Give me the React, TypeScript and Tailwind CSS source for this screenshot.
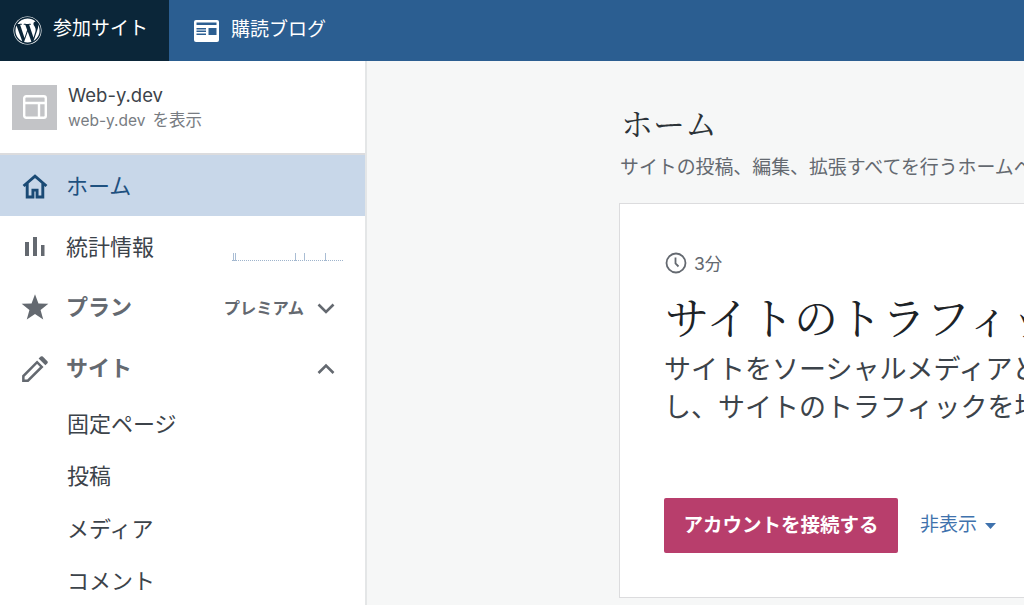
import React from "react";
import { FaWordpress } from "react-icons/fa";

const sans = "font-['Inter','Noto_Sans_CJK_JP',sans-serif]";

function Chevron({ up }: { up?: boolean }) {
  return (
    <svg width="20" height="20" viewBox="0 0 20 20" fill="none" stroke="#646970" strokeWidth="2.600">
      <path d={up ? "M2.500 14L10 6.500l7.500 7.500" : "M2.500 6.500L10 14l7.500-7.500"} />
    </svg>
  );
}

function Row({ icon, label, active, bold, right }: { icon: React.ReactNode; label: string; active?: boolean; bold?: boolean; right?: React.ReactNode }) {
  return (
    <div className={`relative flex h-[61px] items-center pl-[19px] pr-[29px] ${active ? "bg-[#c8d7e9] text-[#1f5180]" : "text-[#3c434a]"}`}>
      <div className="flex w-[32px] shrink-0 items-center justify-center">{icon}</div>
      <span className={`ml-[15px] text-[22px] leading-none ${bold ? "-mt-[2px] font-bold text-[#646970]" : ""}`}>{label}</span>
      {right && <div className="ml-auto flex items-center">{right}</div>}
    </div>
  );
}

const ticks = [1, 3, 63, 72, 93];

export default function App() {
  return (
    <div className={`flex h-[605px] w-[1024px] flex-col overflow-hidden bg-[#f6f7f7] ${sans}`}>
      <header className="flex h-[61px] shrink-0 bg-[#2b5e91] text-white">
        <div className="flex w-[169px] items-center gap-[11px] bg-[#0b2639] pl-[13px]">
          <FaWordpress size={29} color="#fff" />
          <span className="-mt-[2px] text-[19px]">参加サイト</span>
        </div>
        <div className="flex items-center gap-[12px] pl-[25px]">
          <svg width="25" height="22" viewBox="0 0 25 22">
            <rect width="25" height="22" rx="2" fill="#fff" />
            <path d="M2.500 2.500h20V5h-20zM2.500 8H12v1.500H2.500zM2.500 10.500H12V12H2.500zM2.500 13.500H12V15H2.500zM14.500 8h8v7h-8z" fill="#2b5e91" />
          </svg>
          <span className="-mt-[1px] text-[19px]">購読ブログ</span>
        </div>
      </header>

      <div className="flex min-h-0 flex-1">
        <aside className="w-[367px] shrink-0 border-r-2 border-[#e4e6e7] bg-white">
          <div className="flex h-[94px] items-center gap-[11px] border-b-2 border-[#dcdcde] pl-[12px]">
            <div className="flex h-[45px] w-[45px] items-center justify-center bg-[#c3c4c7]">
              <svg width="24" height="24" viewBox="0 0 24 24" fill="none" stroke="#fff" strokeWidth="2.400">
                <rect x="1.200" y="1.200" width="21.600" height="21.600" rx="2" />
                <path d="M1.200 8h21.600M16 8v14.800" />
              </svg>
            </div>
            <div className="pt-[2px]">
              <div className="text-[18.500px] leading-[25px] text-[#3c434a]">Web-y.dev</div>
              <div className="text-[15.500px] leading-[24px] text-[#787c82]">
                web-y.dev<span className="ml-[7px] text-[16.500px]">を表示</span>
              </div>
            </div>
          </div>

          <Row
            active
            label="ホーム"
            icon={
              <svg width="26" height="26" viewBox="0 0 25 25" fill="none" stroke="#1a4a75" strokeWidth="2.800">
                <path d="M1.500 12.500L12.500 3l11 9.500M5 10v13h5.500v-6.500h4V23H20V10" />
              </svg>
            }
          />
          <Row
            label="統計情報"
            icon={
              <svg width="20" height="20" viewBox="0 0 20 20" fill="#646970">
                <rect x="0" y="5" width="4" height="14" />
                <rect x="8" y="0" width="4" height="19" />
                <rect x="16" y="8" width="3.500" height="11" />
              </svg>
            }
            right={
              <svg className="mr-[-7px] mt-[22px]" width="111" height="9" viewBox="0 0 111 9">
                <path d="M0 7.500H111" stroke="#9fb4cc" strokeWidth="1" strokeDasharray="1 1" />
                {ticks.map((x) => (
                  <rect key={x} x={x} y="0" width="1" height="8" fill="#a9bdd4" />
                ))}
              </svg>
            }
          />
          <Row
            bold
            label="プラン"
            icon={
              <svg width="33" height="33" viewBox="0 0 24 24" fill="#646970">
                <path d="M12 2l2.582 6.953L22 9.257l-5.822 4.602L18.180 21 12 16.890 5.820 21l2.002-7.140L2 9.256l7.418-.304z" />
              </svg>
            }
            right={
              <>
                <span className="mr-[12px] mt-[2px] text-[16.300px] font-bold text-[#646970]">プレミアム</span>
                <Chevron />
              </>
            }
          />
          <Row
            bold
            label="サイト"
            icon={
              <svg width="26" height="26" viewBox="0 0 25 25" fill="none">
                <path d="M1.300 23.700v-4.400L14.500 6l4.500 4.500L5.700 23.700z" stroke="#646970" strokeWidth="2.400" />
                <path d="M16 2.500L18 .6a1.500 1.500 0 0 1 2 0l4.400 4.400a1.500 1.500 0 0 1 0 2L22.500 9z" fill="#646970" />
              </svg>
            }
            right={<Chevron up />}
          />
          <nav className="-mt-[1px] flex flex-col pl-[67px] text-[22px] text-[#3c434a]">
            {["固定ページ", "投稿", "メディア", "コメント"].map((t) => (
              <div key={t} className="flex h-[52.500px] shrink-0 items-center">{t}</div>
            ))}
          </nav>
        </aside>

        <main className="min-w-0 flex-1 pl-[252px] pt-[38px]">
          <div className="w-[800px]">
            <h1 className="pl-[2px] font-['Noto_Serif_CJK_JP','Liberation_Serif',serif] text-[32px] leading-[46px] text-[#2c3338]">ホーム</h1>
            <p className="mt-[11px] whitespace-nowrap pl-px text-[18.900px] leading-[24px] text-[#646970]">サイトの投稿、編集、拡張すべてを行うホームページです。</p>
            <section className="mt-[23px] h-[395px] border border-[#dcdcde] bg-white pl-[45px] pt-[46px]">
              <div className="flex items-center gap-[7px] text-[17.500px] leading-[24px] text-[#646970]">
                <svg width="22" height="22" viewBox="0 0 22 22" fill="none" stroke="#646970" strokeWidth="1.800">
                  <circle cx="11" cy="11" r="9.500" />
                  <path d="M10.500 5.500V11.500l3 3" />
                </svg>
                <span className="mt-[2px]">3分</span>
              </div>
              <h2 className="mt-[10px] whitespace-nowrap font-['Noto_Serif_CJK_JP','Liberation_Serif',serif] text-[44px] leading-[60px] text-[#1d2327]">サイトのトラフィックを増やす</h2>
              <p className="-ml-px mt-[5px] whitespace-nowrap text-[27px] leading-[37.500px] text-[#3c434a]">
                サイトをソーシャルメディアと連携
                <br />
                し、サイトのトラフィックを増やしましょう。
              </p>
              <div className="mt-[72px] flex items-center gap-[22px]">
                <button className="-ml-px h-[55px] w-[234px] rounded-[2px] bg-[#b83e6c] text-[19.500px] font-bold text-white">アカウントを接続する</button>
                <span className="flex items-center gap-[8px] text-[19px] text-[#3f72ad]">
                  非表示
                  <svg width="11" height="6" viewBox="0 0 11 6" fill="#3f72ad"><path d="M0 0h11L5.500 6z" /></svg>
                </span>
              </div>
            </section>
          </div>
        </main>
      </div>
    </div>
  );
}
